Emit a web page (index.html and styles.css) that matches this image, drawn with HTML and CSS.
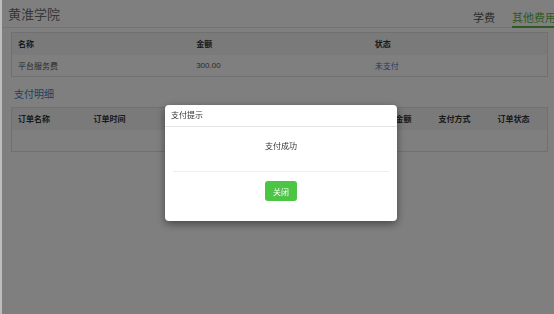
FILE: index.html
```html
<!DOCTYPE html>
<html>
	<head>
		<meta charset="UTF-8">
		<title>黄淮学院 - 其他费用</title>
		<link rel="stylesheet" href="styles.css">
	</head>
	<body>
		<div class="page">
			<div class="page_head">
				<h1 class="page_title">黄淮学院</h1>
				<ul class="page_tabs">
					<li>学费</li>
					<li class="selected">其他费用</li>
				</ul>
			</div>

			<table class="fee_table fee_three">
				<tr><th>名称</th><th>金额</th><th>状态</th></tr>
				<tr><td>平台服务费</td><td>300.00</td><td><a class="link" href="#">未支付</a></td></tr>
			</table>

			<h2 class="sub_title">支付明细</h2>

			<table class="fee_table fee_seven">
				<colgroup>
					<col style="width:76px"><col style="width:96px"><col style="width:95px"><col style="width:95px"><col style="width:59px"><col style="width:59px"><col>
				</colgroup>
				<tr><th>订单名称</th><th>订单时间</th><th>订单编号</th><th>支付时间</th><th>订单金额</th><th>支付方式</th><th>订单状态</th></tr>
				<tr><td></td><td></td><td></td><td></td><td></td><td></td><td></td></tr>
			</table>
		</div>

		<!--弹出层-->
		<div class="mask">
			<div class="dialog">
				<div class="dialog_head">支付提示</div>
				<div class="dialog_body">
					<p class="dialog_msg">支付成功</p>
					<div class="dialog_foot">
						<button class="btn_close">关闭</button>
					</div>
				</div>
			</div>
		</div>
	</body>
</html>
```
FILE: styles.css
```css
*{padding: 0;margin: 0;box-sizing: border-box;}

html,body{height: 100%;}
body{overflow: hidden;background: #fff;border-left: 2px solid #bdbdbd;font-family: "Liberation Sans","Noto Sans CJK SC",sans-serif;color: #555;}

li{list-style: none;}

.page{padding: 0 6px 0 9px;}

.page_head{display: flex;justify-content: space-between;align-items: flex-end;height: 28px;border-bottom: 1px solid #e6e6e6;margin: 0 -6px 4px -9px;padding-left: 6px;}
.page_title{font-size: 13px;font-weight: normal;color: #6e6e6e;line-height: 16px;align-self: center;margin-top: 2px;}
.page_tabs{display: flex;gap: 17px;margin-right: -2px;}
.page_tabs>li{font-size: 11px;line-height: 14px;height: 27px;padding-top: 10px;color: #555;border-bottom: 2px solid transparent;margin-bottom: -1px;}
.page_tabs>.selected{color: #5cb346;border-bottom-color: #5cb346;}

.fee_table{width: 100%;border-collapse: collapse;table-layout: fixed;border: 1px solid #e0e0e0;font-size: 8px;}
.fee_table th{height: 22px;background: #f4f4f4;text-align: left;color: #333;padding: 0 6px;font-weight: bold;}
.fee_table td{height: 22px;padding: 0 6px;color: #555;}
.fee_table .link{color: #3a7fc4;text-decoration: none;}

.sub_title{font-size: 10px;font-weight: normal;color: #3a7fc4;line-height: 14px;padding: 11px 0 0 3px;margin-bottom: 5px;}

.mask{position: fixed;top: 0;right: 0;bottom: 0;left: 2px;background: rgba(0,0,0,.5);padding: 105px 0 0 163px;}

.dialog{width: 232px;background: #fff;border-radius: 4px;box-shadow: 0 3px 8px rgba(0,0,0,.45);font-size: 8px;color: #333;}
.dialog_head{height: 22px;line-height: 22px;padding-left: 6px;border-bottom: 1px solid #e5e5e5;}
.dialog_body{padding: 14px 8px 20px;}
.dialog_msg{text-align: center;line-height: 12px;margin-bottom: 18px;}
.dialog_foot{border-top: 1px solid #eee;padding-top: 9px;display: flex;justify-content: center;}
.btn_close{width: 32px;height: 20px;border: none;border-radius: 3px;background: #4cc444;color: #fff;font-size: 8px;font-family: inherit;cursor: pointer;}
```
